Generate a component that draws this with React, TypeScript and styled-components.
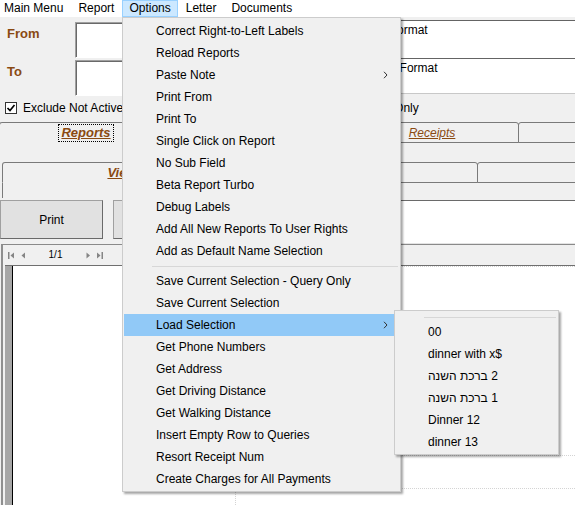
import React from 'react'
import styled, { createGlobalStyle } from 'styled-components'

const GlobalStyle = createGlobalStyle`
  html, body { margin: 0; padding: 0; background: #f0f0f0; }
  body {
    font-family: "Liberation Sans", Arial, "DejaVu Sans", sans-serif;
    font-size: 12px;
    color: #000;
  }
`

const BROWN = '#8a4a12'

const Window = styled.div`
  position: relative;
  width: 575px;
  height: 505px;
  overflow: hidden;
  background: #f0f0f0;
  display: flex;
  flex-direction: column;
`

/* ---------- menu bar ---------- */
const MenuBar = styled.div`
  display: flex;
  gap: 1px;
  height: 17px;
  flex: none;
  background: #fff;
`

const BarItem = styled.div<{ $open?: boolean }>`
  box-sizing: border-box;
  height: 17px;
  line-height: 15px;
  padding: 0 6px;
  border: 1px solid ${p => (p.$open ? '#99d1ff' : 'transparent')};
  background: ${p => (p.$open ? '#cce8ff' : 'transparent')};
  white-space: nowrap;
  &:first-child { padding-left: 3px; }
`

/* ---------- form ---------- */
const Form = styled.div`
  display: flex;
  flex-direction: column;
  padding-top: 3px;
  flex: none;
`

const FieldRow = styled.div`
  display: flex;
  align-items: flex-start;
  height: 38px;
`

const FieldLabel = styled.div`
  box-sizing: border-box;
  width: 75px;
  flex: none;
  padding: 6px 0 0 7px;
  font-size: 13px;
  line-height: 15px;
  font-weight: bold;
  color: ${BROWN};
`

const SunkenBox = styled.div`
  box-sizing: border-box;
  width: 200px;
  height: 36px;
  margin-top: 2px;
  flex: none;
  background: #fff;
  border: 1px solid;
  border-color: #a0a0a0 #fff #fff #a0a0a0;
  box-shadow: inset 1px 1px 0 #696969;
`

const FlatBox = styled.div<{ $h: number; $indent: number; $bottom?: boolean }>`
  box-sizing: border-box;
  flex: 1;
  height: ${p => p.$h}px;
  margin-left: 10px;
  background: #fff;
  border-top: 1px solid #646464;
  border-bottom: ${p => (p.$bottom ? '1px solid #c8c8c8' : 'none')};
  padding: 2px 0 0 ${p => p.$indent}px;
  line-height: 15px;
  white-space: nowrap;
`

const CheckRow = styled.div`
  display: flex;
  align-items: center;
  height: 18px;
  margin-top: 3px;
  padding-left: 5px;
  flex: none;
  line-height: 18px;
`

const CheckGroup = styled.label<{ $offset?: number }>`
  display: flex;
  align-items: center;
  gap: 6px;
  margin-left: ${p => p.$offset ?? 0}px;
  white-space: nowrap;
`

const CheckBox = styled.span`
  box-sizing: border-box;
  width: 12px;
  height: 12px;
  background: #fff;
  border: 1px solid #333;
  display: flex;
  align-items: center;
  justify-content: center;
`

/* ---------- tabs ---------- */
const TabStrip = styled.div<{ $left: number; $top: number }>`
  display: flex;
  height: 21px;
  flex: none;
  margin: ${p => p.$top}px 0 0 ${p => p.$left}px;
`

const Tab = styled.div<{ $w: number; $active?: boolean }>`
  box-sizing: border-box;
  flex: none;
  width: ${p => p.$w}px;
  height: 21px;
  border: 1px solid #7a7a7a;
  border-bottom-color: ${p => (p.$active ? 'transparent' : '#7a7a7a')};
  border-radius: 3px 3px 0 0;
  display: flex;
  align-items: center;
  justify-content: center;
  & + & { margin-left: -1px; }
`

const TabLabel = styled.span<{ $active?: boolean; $focus?: boolean }>`
  font-size: ${p => (p.$active ? 13 : 12)}px;
  font-weight: ${p => (p.$active ? 'bold' : 'normal')};
  font-style: italic;
  text-decoration: underline;
  color: ${BROWN};
  line-height: 16px;
  padding: 0 2px;
  outline: ${p => (p.$focus ? '1px dotted #000' : 'none')};
  white-space: nowrap;
`

const TabPane = styled.div`
  height: 15px;
  margin-left: 2px;
  border-left: 1px solid #7a7a7a;
  flex: none;
`

/* ---------- buttons ---------- */
const ButtonRow = styled.div`
  display: flex;
  align-items: flex-start;
  height: 44px;
  margin-top: 2px;
  flex: none;
`

const PushButton = styled.div`
  box-sizing: border-box;
  flex: none;
  width: 103px;
  height: 39px;
  background: #e1e1e1;
  border: 1px solid #a0a0a0;
  border-right-color: #6a6a6a;
  border-bottom-color: #6a6a6a;
  display: flex;
  align-items: center;
  justify-content: center;
  & + & { margin-left: 10px; }
`

const MemoBox = styled.div`
  box-sizing: border-box;
  flex: 1;
  height: 44px;
  margin-left: 10px;
  background: #fff;
  border-top: 1px solid #6a6a6a;
  border-bottom: 1px solid #e3e3e3;
`

/* ---------- report viewer ---------- */
const Viewer = styled.div`
  flex: 1;
  display: flex;
  flex-direction: column;
  margin-left: 1px;
  border-top: 1px solid #8a8a8a;
  border-left: 2px solid #8f8f8f;
`

const ViewerToolbar = styled.div`
  display: flex;
  align-items: center;
  height: 20px;
  padding-left: 5px;
  flex: none;
`

const NavGap = styled.span<{ $w: number }>`
  width: ${p => p.$w}px;
  flex: none;
`

const PageCounter = styled.span`
  width: 61px;
  text-align: center;
  font-size: 10px;
  line-height: 12px;
`

const Canvas = styled.div`
  flex: 1;
  display: flex;
  margin-left: 2px;
  border-top: 1px solid #6f6f6f;
`

const Gutter = styled.div`
  width: 7px;
  flex: none;
  background: #a6a6a6;
  border-right: 1px solid #000;
`

const Page = styled.div`
  flex: 1;
  position: relative;
  background: #fff;
`

const GuideH = styled.div<{ $top: number; $left: number }>`
  position: absolute;
  top: ${p => p.$top}px;
  left: ${p => p.$left}px;
  right: 0;
  border-top: 1px dotted #d4d4d4;
`

const GuideV = styled.div<{ $left: number }>`
  position: absolute;
  top: 0;
  bottom: 0;
  left: ${p => p.$left}px;
  border-left: 1px dotted #d4d4d4;
`

/* ---------- drop-down menu ---------- */
const DropMenu = styled.div<{ $top: number; $left: number; $w: number }>`
  position: absolute;
  top: ${p => p.$top}px;
  left: ${p => p.$left}px;
  width: ${p => p.$w}px;
  box-sizing: border-box;
  padding: 2px 2px 1px 1px;
  background: #f0f0f0;
  border: 1px solid #cccccc;
  box-shadow: 2px 2px 2px rgba(0, 0, 0, 0.35);
  z-index: 10;
`

const MenuItem = styled.div<{ $hot?: boolean }>`
  display: flex;
  align-items: center;
  justify-content: space-between;
  height: 22px;
  line-height: 22px;
  padding: 0 7px 0 32px;
  margin-right: 3px;
  background: ${p => (p.$hot ? '#91c9f7' : 'transparent')};
  white-space: nowrap;
`

const MenuSeparator = styled.div`
  height: 1px;
  margin: 4px 0 3px 28px;
  background: #d7d7d7;
`

const Chevron = () => (
  <svg width="5" height="8" viewBox="0 0 5 8">
    <polyline points="1,0.8 4,4 1,7.2" fill="none" stroke="#333" strokeWidth="1" />
  </svg>
)

const Tick = () => (
  <svg width="10" height="10" viewBox="0 0 10 10">
    <polyline points="1.5,5 4,7.5 8.5,2" fill="none" stroke="#000" strokeWidth="1.7" />
  </svg>
)

const NavIcon = ({ dir, bar }: { dir: 'l' | 'r'; bar?: boolean }) => {
  const w = bar ? 6 : 4
  const tri =
    dir === 'l'
      ? `${w},0.5 ${w - 3.5},3.5 ${w},6.5`
      : `${bar ? 0 : 0.5},0.5 ${bar ? 3.5 : 4},3.5 ${bar ? 0 : 0.5},6.5`
  return (
    <svg width={w} height="7" viewBox={`0 0 ${w} 7`}>
      <polygon points={tri} fill="#858585" />
      {bar && <rect x={dir === 'l' ? 0 : 4.5} y="0" width="1.5" height="7" fill="#858585" />}
    </svg>
  )
}

const optionsTop = [
  'Correct Right-to-Left Labels',
  'Reload Reports',
  'Paste Note',
  'Print From',
  'Print To',
  'Single Click on Report',
  'No Sub Field',
  'Beta Report Turbo',
  'Debug Labels',
  'Add All New Reports To User Rights',
  'Add as Default Name Selection',
]

const optionsBottom = [
  'Save Current Selection - Query Only',
  'Save Current Selection',
  'Load Selection',
  'Get Phone Numbers',
  'Get Address',
  'Get Driving Distance',
  'Get Walking Distance',
  'Insert Empty Row to Queries',
  'Resort Receipt Num',
  'Create Charges for All Payments',
]

const withArrow = ['Paste Note', 'Load Selection']

const savedSelections: { label: string; rtl?: boolean }[] = [
  { label: '00' },
  { label: 'dinner with x$' },
  { label: '2 ברכת השנה', rtl: true },
  { label: '1 ברכת השנה', rtl: true },
  { label: 'Dinner 12' },
  { label: 'dinner 13' },
]

export default function App() {
  const renderItem = (label: string) => (
    <MenuItem key={label} $hot={label === 'Load Selection'}>
      <span>{label}</span>
      {withArrow.includes(label) && <Chevron />}
    </MenuItem>
  )

  return (
    <>
      <GlobalStyle />
      <Window>
        <MenuBar>
          <BarItem>Main Menu</BarItem>
          <BarItem>Report</BarItem>
          <BarItem $open>Options</BarItem>
          <BarItem>Letter</BarItem>
          <BarItem>Documents</BarItem>
        </MenuBar>

        <Form>
          <FieldRow>
            <FieldLabel>From</FieldLabel>
            <SunkenBox />
            <FlatBox $h={38} $indent={76}>Date Format</FlatBox>
          </FieldRow>
          <FieldRow>
            <FieldLabel>To</FieldLabel>
            <SunkenBox />
            <FlatBox $h={36} $indent={85} $bottom>Time Format</FlatBox>
          </FieldRow>
        </Form>

        <CheckRow>
          <CheckGroup>
            <CheckBox><Tick /></CheckBox>
            Exclude Not Active
          </CheckGroup>
          <CheckGroup $offset={203}>
            <CheckBox />
            Selected Only
          </CheckGroup>
        </CheckRow>

        <TabStrip $left={-1} $top={5}>
          <Tab $w={174} $active>
            <TabLabel $active $focus>Reports</TabLabel>
          </Tab>
          <Tab $w={174} />
          <Tab $w={174}>
            <TabLabel>Receipts</TabLabel>
          </Tab>
          <Tab $w={174} />
        </TabStrip>

        <TabStrip $left={2} $top={19}>
          <Tab $w={240} $active>
            <TabLabel $active>View</TabLabel>
          </Tab>
          <Tab $w={237} />
          <Tab $w={237} />
        </TabStrip>
        <TabPane />

        <ButtonRow>
          <PushButton>Print</PushButton>
          <PushButton />
          <MemoBox />
        </ButtonRow>

        <Viewer>
          <ViewerToolbar>
            <NavIcon dir="l" bar />
            <NavGap $w={7} />
            <NavIcon dir="l" />
            <PageCounter>1/1</PageCounter>
            <NavIcon dir="r" />
            <NavGap $w={7} />
            <NavIcon dir="r" bar />
          </ViewerToolbar>
          <Canvas>
            <Gutter />
            <Page>
              <GuideH $top={0} $left={222} />
              <GuideH $top={189} $left={222} />
              <GuideH $top={222} $left={222} />
              <GuideV $left={222} />
            </Page>
          </Canvas>
        </Viewer>

        <DropMenu $top={17} $left={122} $w={279}>
          {optionsTop.map(renderItem)}
          <MenuSeparator />
          {optionsBottom.map(renderItem)}
        </DropMenu>

        <DropMenu $top={310} $left={394} $w={165}>
          <MenuSeparator />
          {savedSelections.map(s => (
            <MenuItem key={s.label}>
              {s.rtl ? <span dir="rtl">{s.label}</span> : <span>{s.label}</span>}
            </MenuItem>
          ))}
        </DropMenu>
      </Window>
    </>
  )
}
